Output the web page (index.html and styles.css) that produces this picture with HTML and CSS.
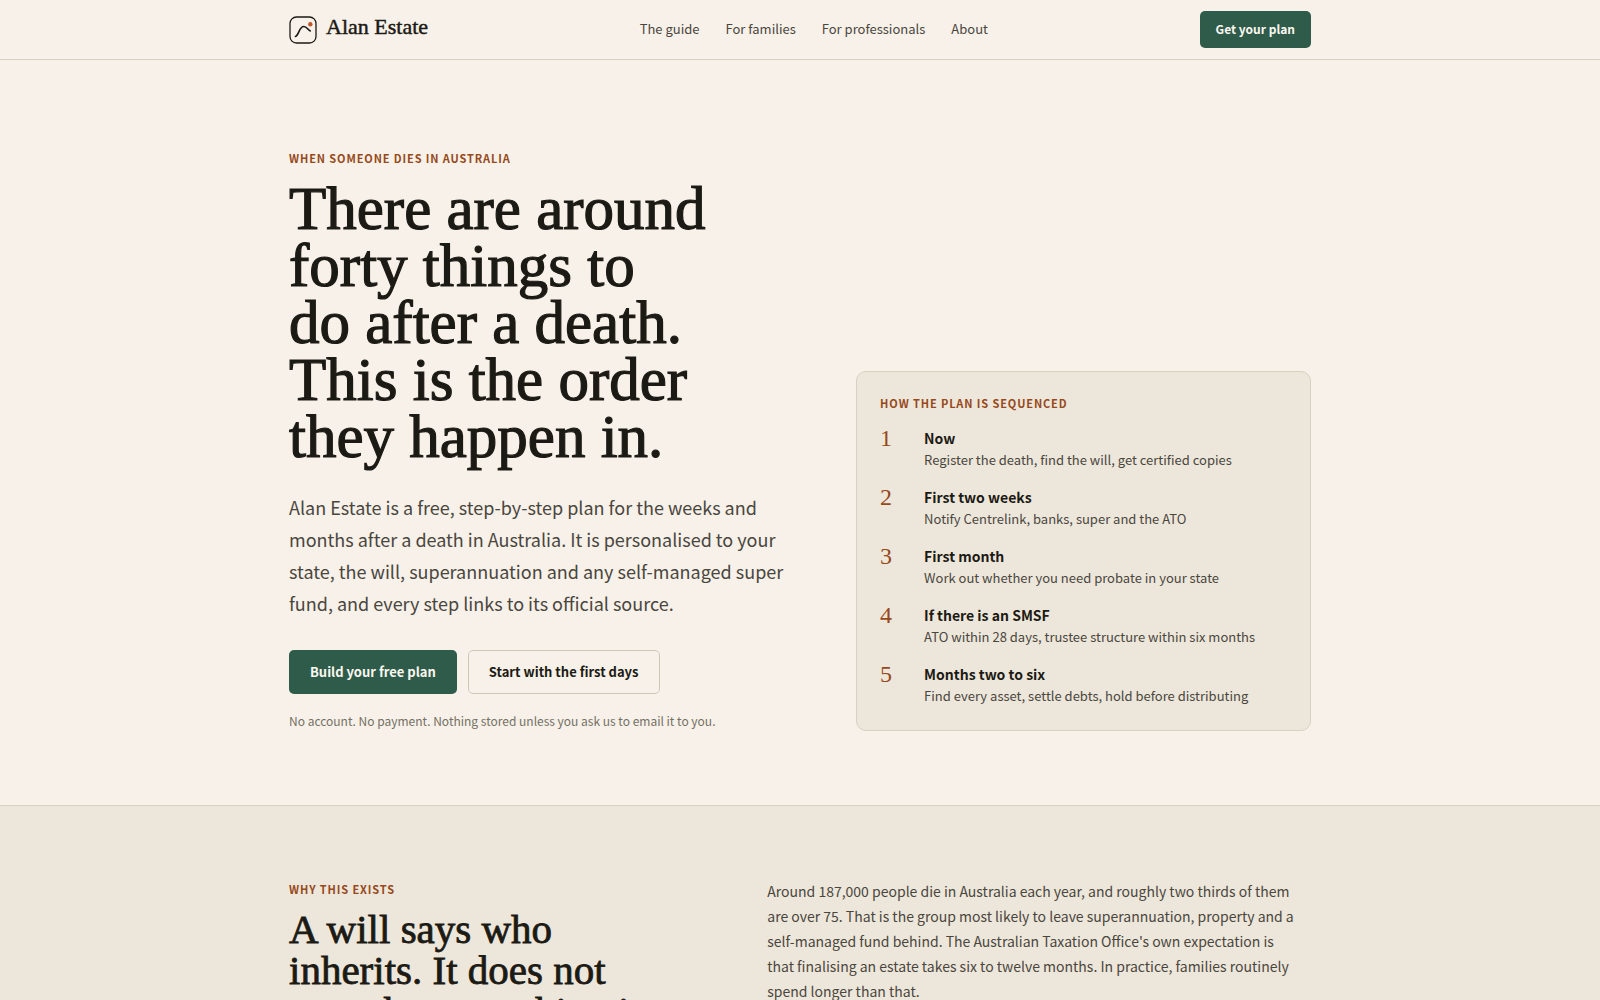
FILE: index.html
```html
<!DOCTYPE html>
<html lang="en-AU">
<head>
<meta charset="utf-8">
<meta name="viewport" content="width=device-width, initial-scale=1">
<title>Alan Estate</title>
<link rel="stylesheet" href="styles.css">
</head>
<body>
<header class="site-header">
  <div class="container header-row">
    <a class="brand" href="#">
      <svg class="brand-mark" viewBox="0 0 28 28" fill="none" aria-hidden="true">
        <rect x="1" y="1" width="26" height="26" rx="6.500" stroke="#1c1a14" stroke-width="1.3"/>
        <path d="M6.500 20.500C10 19.500 10 10.500 14.800 10.500C18 10.500 18.500 13.600 21.300 15" stroke="#1c1a14" stroke-width="1.6" stroke-linecap="round"/>
        <circle cx="21.300" cy="8.200" r="2.200" fill="#c0562a"/>
      </svg>
      <span class="brand-name">Alan Estate</span>
    </a>
    <nav class="nav" aria-label="Main">
      <a href="#">The guide</a>
      <a href="#">For families</a>
      <a href="#">For professionals</a>
      <a href="#">About</a>
    </nav>
    <div class="header-action"><a class="button button-primary button-small" href="#">Get your plan</a></div>
  </div>
</header>
<main>
  <section class="hero">
    <div class="container hero-grid">
      <div class="hero-copy">
        <p class="eyebrow">When someone dies in Australia</p>
        <h1>There are around<br>forty things to<br>do after a death.<br>This is the order<br>they happen in.</h1>
        <p class="lead">Alan Estate is a free, step-by-step plan for the weeks and months after a death in Australia. It is personalised to your state, the will, superannuation and any self-managed super fund, and every step links to its official source.</p>
        <div class="actions">
          <a class="button button-primary" href="#">Build your free plan</a>
          <a class="button button-outline" href="#">Start with the first days</a>
        </div>
        <p class="note">No account. No payment. Nothing stored unless you ask us to email it to you.</p>
      </div>
      <aside class="card">
        <p class="eyebrow">How the plan is sequenced</p>
        <ol class="steps">
          <li><span class="number">1</span><div><h3>Now</h3><p>Register the death, find the will, get certified copies</p></div></li>
          <li><span class="number">2</span><div><h3>First two weeks</h3><p>Notify Centrelink, banks, super and the ATO</p></div></li>
          <li><span class="number">3</span><div><h3>First month</h3><p>Work out whether you need probate in your state</p></div></li>
          <li><span class="number">4</span><div><h3>If there is an SMSF</h3><p>ATO within 28 days, trustee structure within six months</p></div></li>
          <li><span class="number">5</span><div><h3>Months two to six</h3><p>Find every asset, settle debts, hold before distributing</p></div></li>
        </ol>
      </aside>
    </div>
  </section>
  <section class="why">
    <div class="container why-grid">
      <div>
        <p class="eyebrow">Why this exists</p>
        <h2>A will says who<br>inherits. It does not<br>say where anything is.</h2>
      </div>
      <p class="why-text">Around 187,000 people die in Australia each year, and roughly two thirds of them are over 75. That is the group most likely to leave superannuation, property and a self-managed fund behind. The Australian Taxation Office's own expectation is that finalising an estate takes six to twelve months. In practice, families routinely spend longer than that.</p>
    </div>
  </section>
</main>
</body>
</html>
```
FILE: styles.css
```css
:root {
  --paper: #f7f1e9;
  --sand: #ede6da;
  --line: #d6d2c2;
  --ink: #1c1a14;
  --body: #4a463e;
  --muted: #757064;
  --rust: #96491a;
  --green: #2e5b4a;
  --sans: "Noto Sans CJK SC", "Open Sans", sans-serif;
  --serif: "Liberation Serif", serif;
}
* { box-sizing: border-box; margin: 0; }
body { background: var(--paper); color: var(--body); font-family: var(--sans); font-size: 13px; overflow-x: hidden; }
a { color: inherit; text-decoration: none; }
.container { max-width: 1070px; margin: 0 auto; padding: 0 24px; }

.site-header { border-bottom: 1px solid var(--line); }
.header-row { display: flex; align-items: center; justify-content: space-between; min-height: 59px; }
.brand { display: flex; align-items: center; gap: 9px; color: var(--ink); }
.brand-mark { width: 28px; height: 28px; }
.brand-name { font: 22px/32px var(--serif); padding-bottom: 6px; -webkit-text-stroke: 0.02em; }
.nav { display: flex; flex-wrap: wrap; gap: 26px; line-height: 24px; padding-bottom: 2px; }

.button { display: inline-flex; align-items: center; justify-content: center; padding: 0 20px; height: 44px; border: 1px solid transparent; border-radius: 5px; font-size: 13px; line-height: 24px; font-weight: 700; }
.button-small { height: 37px; padding: 0 15px 2px; font-size: 12px; }
.button-primary { background: var(--green); color: #fbf7f0; }
.button-outline { border-color: #cdc9b8; color: var(--ink); }

.hero { padding: 88px 0 74px; }
.hero-grid { display: grid; grid-template-columns: 115fr 100fr; gap: 44px; align-items: end; }
.eyebrow { color: var(--rust); font-size: 11px; line-height: 20px; font-weight: 700; letter-spacing: 0.08em; text-transform: uppercase; }
h1, h2 { color: var(--ink); font-family: var(--serif); font-weight: 400; -webkit-text-stroke: 0.02em; }
h1 { margin-top: 12px; font-size: 61px; line-height: 57px; }
.lead { margin-top: 26px; font-size: 18px; line-height: 32px; }
.actions { display: flex; flex-wrap: wrap; gap: 11px; margin-top: 31px; }
.note { margin-top: 17px; color: var(--muted); font-size: 12px; line-height: 20px; }

.card { padding: 21px 23px 24px; border: 1px solid var(--line); border-radius: 10px; background: var(--sand); }
.steps { list-style: none; padding: 0; margin-top: 13px; display: grid; gap: 15px; }
.steps li { display: grid; grid-template-columns: 32px 1fr; gap: 12px; }
.number { color: var(--rust); font: 24px/24px var(--serif); }
.steps h3 { color: var(--ink); font-size: 14px; line-height: 24px; font-weight: 700; }
.steps p { font-size: 13px; line-height: 20px; }

.why { border-top: 1px solid var(--line); background: var(--sand); padding: 73px 0; }
.why-grid { display: grid; grid-template-columns: 10fr 13fr; gap: 60px; }
h2 { margin-top: 10px; font-size: 41px; line-height: 41px; }
.why-text { max-width: 532px; font-size: 14px; line-height: 25px; }
```
